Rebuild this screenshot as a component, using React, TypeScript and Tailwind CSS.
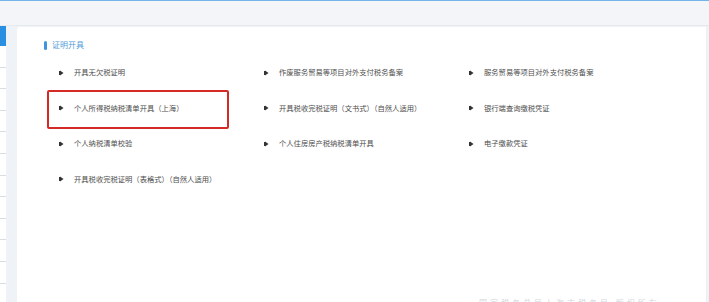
import React from 'react';

const items = [
  '开具无欠税证明',
  '作废服务贸易等项目对外支付税务备案',
  '服务贸易等项目对外支付税务备案',
  '个人所得税纳税清单开具（上海）',
  '开具税收完税证明（文书式）（自然人适用）',
  '银行端查询缴税凭证',
  '个人纳税清单校验',
  '个人住房房产税纳税清单开具',
  '电子缴款凭证',
  '开具税收完税证明（表格式）（自然人适用）',
];

function Arrow() {
  return (
    <svg width="5" height="6" viewBox="0 0 5 6" className="shrink-0">
      <rect x="0" y="1" width="1" height="4" fill="#333" />
      <path d="M1 0.5 L4.5 3 L1 5.5 Z" fill="#333" />
    </svg>
  );
}

function Item({ label, marked }: { label: string; marked?: boolean }) {
  return (
    <div className="relative h-[35.5px] flex items-center gap-[10px] pl-[12px]">
      <Arrow />
      <span className="text-[7.3px] text-[#4d4d4d] whitespace-nowrap">{label}</span>
      {marked && (
        <div className="absolute left-0 top-[-1px] w-[182px] h-[39px] border-2 border-[#d42a25] rounded-[2px]" />
      )}
    </div>
  );
}

export default function App() {
  return (
    <div
      className="w-[709px] h-[302px] overflow-hidden bg-[#eff2f6] flex flex-col"
      style={{ fontFamily: '"Noto Sans CJK SC", "Noto Sans", sans-serif' }}
    >
      <div className="h-[26px] shrink-0 bg-[#f3f5f8] border-t border-[#74b4ea] border-b border-b-[#e6e9ee]" />
      <div className="flex flex-1 min-h-0">
        <div className="w-[6px] bg-white flex flex-col">
          <div className="h-[20px] bg-[#2a8fe0]" />
          {Array.from({ length: 11 }).map((_, i) => (
            <div key={i} className="h-[21.6px] border-b border-dashed border-[#d8dde4]" />
          ))}
        </div>
        <div className="w-[11px]" />
        <div className="flex-1 bg-white rounded-tl-[3px] mt-[1px] mr-[2px] border-r border-[#eceff3] pl-[27px] pt-[13px] relative">
          <div className="flex items-center gap-[5px] h-[10px]">
            <div className="w-[3px] h-[9px] rounded-full bg-[#3c95de]" />
            <span className="text-[8px] text-[#4f9ad8] whitespace-nowrap">证明开具</span>
          </div>
          <div className="grid grid-cols-[205px_205px_205px] pl-[3px] mt-[5px]">
            {items.map((label, i) => (
              <Item key={i} label={label} marked={i === 3} />
            ))}
          </div>
          <div className="absolute left-[462px] top-[270px] text-[8px] text-[#d3d6db] whitespace-nowrap tracking-[3px]">
            国家税务总局上海市税务局 版权所有
          </div>
        </div>
      </div>
    </div>
  );
}
